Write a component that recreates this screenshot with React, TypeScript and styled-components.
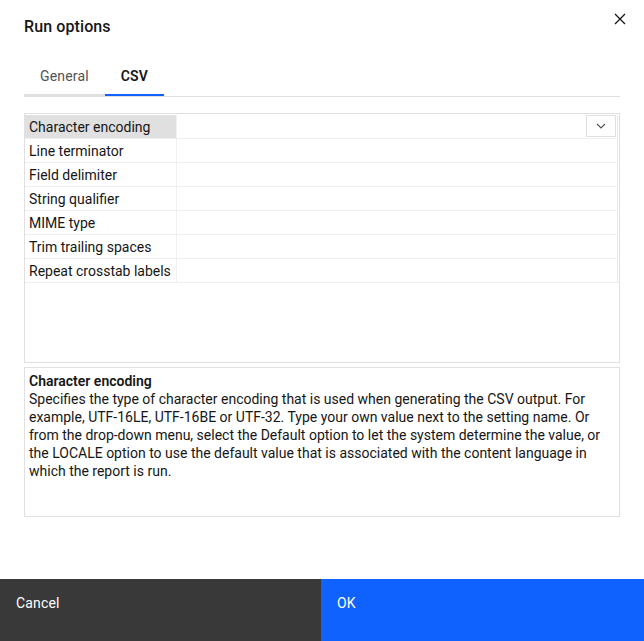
import { FC } from 'react';
import styled, { createGlobalStyle } from 'styled-components';

const GlobalStyle = createGlobalStyle`
  html, body {
    margin: 0;
    padding: 0;
    background: #fff;
  }
  body {
    font-family: Roboto, 'Liberation Sans', sans-serif;
    color: #161616;
  }
  * {
    box-sizing: border-box;
  }
`;

const Dialog = styled.div`
  display: flex;
  flex-direction: column;
  width: 644px;
  height: 641px;
  overflow: hidden;
`;

const Body = styled.div`
  flex: 1;
  display: flex;
  flex-direction: column;
  padding: 0 24px;
`;

const Header = styled.header`
  display: flex;
  justify-content: space-between;
  align-items: flex-start;
  padding-top: 17px;
  height: 56px;
`;

const Title = styled.h2`
  margin: 0;
  font-size: 16px;
  line-height: 20px;
  font-weight: 500;
  letter-spacing: 0.1px;
`;

const CloseButton = styled.button`
  display: flex;
  align-items: center;
  justify-content: center;
  width: 16px;
  height: 16px;
  margin: -6px -8px 0 0;
  padding: 0;
  border: none;
  background: none;
  cursor: pointer;
`;

const TabList = styled.div`
  display: flex;
  border-bottom: 1px solid #e0e0e0;
`;

const Tab = styled.button<{ active?: boolean }>`
  height: 40px;
  padding: 1px 16px 0;
  border: none;
  border-bottom: 2px solid ${({ active }) => (active ? '#0f62fe' : '#e0e0e0')};
  background: none;
  font-family: inherit;
  font-size: 14px;
  letter-spacing: 0.16px;
  font-weight: ${({ active }) => (active ? 600 : 400)};
  color: ${({ active }) => (active ? '#161616' : '#525252')};
  cursor: pointer;
`;

const PropertyBox = styled.div`
  margin-top: 16px;
  height: 250px;
  border: 1px solid #e0e0e0;
  padding: 1px 1px 0 0;
`;

const PropertyGrid = styled.div`
  border-right: 1px solid #e8e8e8;
`;

const Row = styled.div`
  display: grid;
  grid-template-columns: 152px 1fr;
  height: 24px;
  border-bottom: 1px solid #f0f0f0;
`;

const Label = styled.div<{ selected?: boolean }>`
  display: flex;
  align-items: center;
  padding-left: 4px;
  font-size: 14px;
  white-space: nowrap;
  background: ${({ selected }) => (selected ? '#e0e0e0' : 'transparent')};
  border-right: 1px solid #f0f0f0;
`;

const Value = styled.div`
  display: flex;
  justify-content: flex-end;
  align-items: flex-start;
`;

const DropButton = styled.button`
  display: flex;
  align-items: center;
  justify-content: center;
  width: 30px;
  height: 22px;
  margin: 0 1px 0 0;
  padding: 0;
  border: 1px solid #e0e0e0;
  background: #fff;
  cursor: pointer;
`;

const Description = styled.div`
  margin-top: 4px;
  height: 150px;
  border: 1px solid #e0e0e0;
  padding: 4px 4px;
  font-size: 14px;
  line-height: 18px;
`;

const DescTitle = styled.div`
  font-weight: 600;
`;

const DescText = styled.p`
  margin: 0;
`;

const Footer = styled.footer`
  display: grid;
  grid-template-columns: 321px 1fr;
  height: 62px;
  flex-shrink: 0;
`;

const FooterButton = styled.button<{ kind: 'secondary' | 'primary' }>`
  display: flex;
  align-items: flex-start;
  padding: 16px 16px;
  border: none;
  font-family: inherit;
  font-size: 14px;
  letter-spacing: 0.16px;
  text-align: left;
  color: #fff;
  background: ${({ kind }) => (kind === 'primary' ? '#0f62fe' : '#393939')};
  cursor: pointer;
`;

const rows = [
  'Character encoding',
  'Line terminator',
  'Field delimiter',
  'String qualifier',
  'MIME type',
  'Trim trailing spaces',
  'Repeat crosstab labels',
];

const App: FC = () => {
  return (
    <Dialog>
      <GlobalStyle />
      <Body>
        <Header>
          <Title>Run options</Title>
          <CloseButton aria-label="Close">
            <svg width="12" height="12" viewBox="0 0 12 12">
              <path d="M1 1 L11 11 M11 1 L1 11" stroke="#161616" strokeWidth="1.3" />
            </svg>
          </CloseButton>
        </Header>
        <TabList>
          <Tab>General</Tab>
          <Tab active>CSV</Tab>
        </TabList>
        <PropertyBox>
          <PropertyGrid>
            {rows.map((name, i) => (
              <Row key={name}>
                <Label selected={i === 0}>{name}</Label>
                <Value>
                  {i === 0 && (
                    <DropButton aria-label="Open menu">
                      <svg width="10" height="6" viewBox="0 0 10 6">
                        <path d="M1 1 L5 5 L9 1" fill="none" stroke="#525252" strokeWidth="1.1" />
                      </svg>
                    </DropButton>
                  )}
                </Value>
              </Row>
            ))}
          </PropertyGrid>
        </PropertyBox>
        <Description>
          <DescTitle>Character encoding</DescTitle>
          <DescText>
            Specifies the type of character encoding that is used when generating the CSV output. For
            example, UTF-16LE, UTF-16BE or UTF-32. Type your own value next to the setting name. Or
            from the drop-down menu, select the Default option to let the system determine the value, or
            the LOCALE option to use the default value that is associated with the content language in
            which the report is run.
          </DescText>
        </Description>
      </Body>
      <Footer>
        <FooterButton kind="secondary">Cancel</FooterButton>
        <FooterButton kind="primary">OK</FooterButton>
      </Footer>
    </Dialog>
  );
};

export default App;
